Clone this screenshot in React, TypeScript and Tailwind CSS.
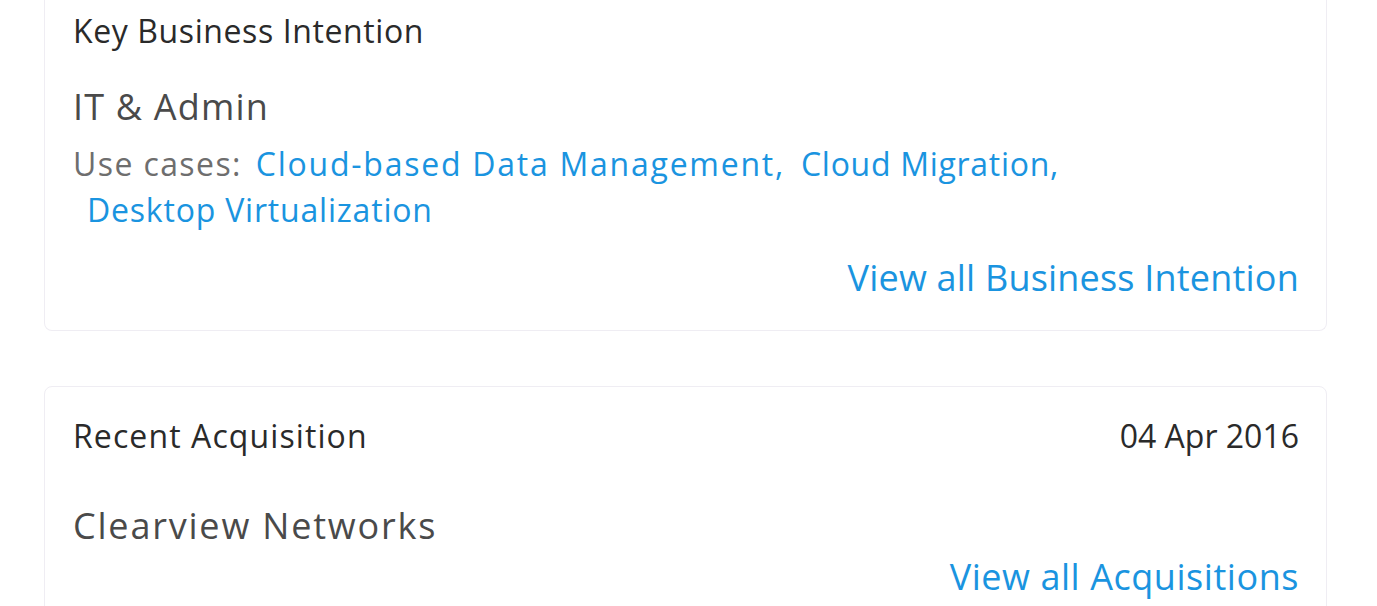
import React from "react";

const font = { fontFamily: '"Open Sans", "Liberation Sans", sans-serif' };

const Card = ({ children, top = false }: { children: React.ReactNode; top?: boolean }) => (
    <div
        className={
            top
                ? "bg-white border border-t-0 border-[#efedf3] rounded-b-lg pl-[28px] pr-[27px]"
                : "bg-white border border-[#efedf3] rounded-lg pl-[28px] pr-[27px]"
        }
    >
        {children}
    </div>
);

const App = () => {
    return (
        <div className="w-full min-h-screen bg-white pl-[44px] pr-[50px]" style={font}>
            <Card top>
                <h2 className="pt-[11px] text-[32px] leading-[40px] tracking-[0.6px] text-[#2a2a2a]">
                    Key Business Intention
                </h2>
                <h1 className="mt-[34px] text-[36px] leading-[44px] tracking-[1.2px] text-[#4a4a4a]">IT &amp; Admin</h1>
                <div className="mt-[12px] text-[32px] leading-[46px] tracking-[1.4px] text-[#6e6e6e]">
                    <span>Use cases:</span>
                    <a className="inline-block ml-[14px] tracking-[1.75px] text-[#1a94e0]">Cloud-based Data Management,</a>
                    <a className="inline-block ml-[16px] tracking-[0.7px] text-[#1a94e0]">Cloud Migration,</a>
                    <a className="inline-block ml-[14px] tracking-[0.8px] text-[#1a94e0]">Desktop Virtualization</a>
                </div>
                <div className="flex justify-end mt-[23px] pb-[30px]">
                    <a className="text-[36px] leading-[44px] tracking-[0.2px] text-[#1a94e0]">View all Business Intention</a>
                </div>
            </Card>
            <div className="h-[55px]" />
            <Card>
                <div className="flex justify-between pt-[29px] text-[32px] leading-[40px] text-[#2a2a2a]">
                    <span className="tracking-[1.1px]">Recent Acquisition</span>
                    <span>04 Apr 2016</span>
                </div>
                <h1 className="mt-[48px] text-[36px] leading-[44px] tracking-[1.8px] text-[#4a4a4a]">Clearview Networks</h1>
                <div className="flex justify-end mt-[7px] pb-[30px]">
                    <a className="text-[36px] leading-[44px] tracking-[0.55px] text-[#1a94e0]">View all Acquisitions</a>
                </div>
            </Card>
        </div>
    );
};

export default App;
